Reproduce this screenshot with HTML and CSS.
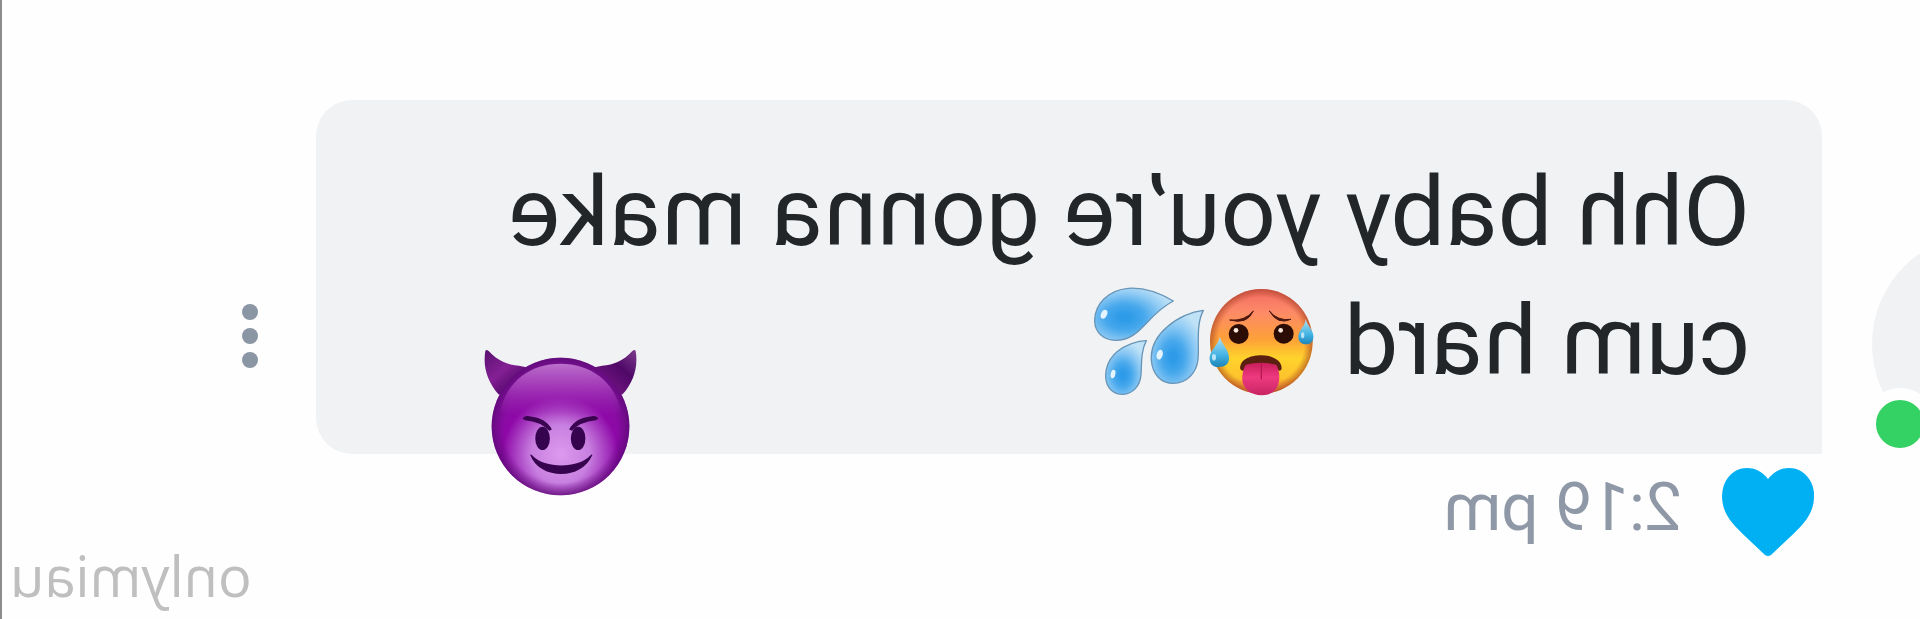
FILE: index.html
```
<!DOCTYPE html>
<html lang="en">
<head>
  <meta charset="UTF-8" />
  <meta name="viewport" content="width=device-width, initial-scale=1.0"/>
  <title>Chat</title>
  <link rel="stylesheet" href="styles.css">
</head>
<body>
  <main class="chat mirrored">
    <div class="avatar">
      <span class="online"></span>
    </div>

    <div class="bubble">
      <p class="message">Ohh baby you’re gonna make cum hard
        <svg class="emoji" viewBox="380 20 330 336" role="img" aria-label="hot face">
          <defs>
            <linearGradient id="hotFill" x1="0" y1="0" x2="0" y2="1">
              <stop offset="0" stop-color="#f26a62"/>
              <stop offset="0.22" stop-color="#fd8a68"/>
              <stop offset="0.48" stop-color="#fda038"/>
              <stop offset="0.66" stop-color="#ffd32c"/>
              <stop offset="0.85" stop-color="#fdc22c"/>
              <stop offset="1" stop-color="#e8783c"/>
            </linearGradient>
            <radialGradient id="hotEdge">
              <stop offset="0.84" stop-color="#a8401c" stop-opacity="0"/>
              <stop offset="1" stop-color="#a03a20" stop-opacity="0.6"/>
            </radialGradient>
            <linearGradient id="tongue" x1="0" y1="0" x2="0" y2="1">
              <stop offset="0" stop-color="#c81e5a"/>
              <stop offset="0.45" stop-color="#ee3a80"/>
              <stop offset="1" stop-color="#c82462"/>
            </linearGradient>
            <linearGradient id="sweat" x1="0" y1="0" x2="0" y2="1">
              <stop offset="0" stop-color="#b4e2f4"/>
              <stop offset="0.6" stop-color="#45b4e4"/>
              <stop offset="1" stop-color="#1d84b8"/>
            </linearGradient>
          </defs>
          <g transform="translate(1090 0) scale(-1 1)">
            <ellipse cx="543" cy="186" rx="154" ry="157" fill="url(#hotFill)"/>
            <ellipse cx="543" cy="186" rx="154" ry="157" fill="url(#hotEdge)"/>
            <path d="M448 122 Q494 126 519 95 Q500 137 448 122 Z M567 95 Q592 126 632 120 Q592 138 567 95 Z" fill="#4a1710" stroke="#4a1710" stroke-width="3" stroke-linejoin="round"/>
            <circle cx="475" cy="164" r="30" fill="#2b0d06"/>
            <circle cx="610" cy="163" r="30" fill="#2b0d06"/>
            <circle cx="467" cy="153" r="7" fill="#f8e8dc"/>
            <circle cx="601" cy="153" r="7" fill="#f8e8dc"/>
            <path d="M479 266 C480 238 514 228 543 228 C574 228 604 242 604 268 Q600 279 588 270 Q543 258 498 270 Q482 280 479 266 Z" fill="#5a2010"/>
            <path d="M496 256 Q543 244 588 256 Q600 280 596 306 Q588 348 543 348 Q496 346 486 306 Q484 276 496 256 Z" fill="url(#tongue)"/>
            <path d="M543 254 V298" stroke="#b8184e" stroke-width="4" stroke-linecap="round"/>
            <path d="M418 172 C424 194 446 212 446 236 C446 254 434 263 414 263 C396 263 387 252 388 234 C390 210 414 198 418 172 Z" fill="url(#sweat)"/>
            <path d="M676 119 C682 142 701 154 699 176 C697 190 688 195 677 195 C662 195 652 184 654 169 C656 150 674 142 676 119 Z" fill="url(#sweat)"/>
            <ellipse cx="401" cy="234" rx="6" ry="10" fill="#d8f3ff" opacity="0.8"/>
            <ellipse cx="667" cy="168" rx="5" ry="9" fill="#d8f3ff" opacity="0.8"/>
          </g>
        </svg><svg class="emoji" viewBox="35 20 330 336" role="img" aria-label="sweat droplets">
          <defs>
            <radialGradient id="dropA" cx="0.38" cy="0.56" r="0.62">
              <stop offset="0.1" stop-color="#2d9be8"/>
              <stop offset="0.4" stop-color="#47a8ec"/>
              <stop offset="0.75" stop-color="#8ecaf4"/>
              <stop offset="1" stop-color="#b9dff6"/>
            </radialGradient>
            <radialGradient id="dropB" cx="0.42" cy="0.64" r="0.62">
              <stop offset="0.1" stop-color="#2d9be8"/>
              <stop offset="0.35" stop-color="#47a8ec"/>
              <stop offset="0.7" stop-color="#8ecaf4"/>
              <stop offset="1" stop-color="#bfe2f6"/>
            </radialGradient>
          </defs>
          <g transform="translate(400 0) scale(-1 1)" stroke="#6795b8" stroke-width="4" stroke-linejoin="round">
            <path d="M273 65 C220 34 181 24 138 27 C78 32 36 74 37 126 C38 162 67 183 99 183 C178 182 190 108 273 65 Z" fill="url(#dropA)"/>
            <path d="M363 93 C328 97 285 115 254 143 C218 174 205 210 207 242 C210 286 237 312 273 312 C313 311 342 282 347 240 C351 192 340 137 363 93 Z" fill="url(#dropB)"/>
            <path d="M192 184 C166 184 129 196 104 217 C78 240 69 268 70 294 C72 327 94 345 121 345 C152 344 173 320 176 286 C178 248 176 214 192 184 Z" fill="url(#dropB)"/>
            <g fill="#e4f4ff" stroke="none">
              <ellipse cx="65" cy="105" rx="9" ry="14" transform="rotate(25 65 105)"/>
              <ellipse cx="232" cy="226" rx="9" ry="15" transform="rotate(15 232 226)"/>
              <ellipse cx="92" cy="284" rx="7" ry="13" transform="rotate(12 92 284)"/>
            </g>
          </g>
        </svg>
      </p>

      <svg class="sticker" viewBox="40 25 460 445" role="img" aria-label="smiling face with horns">
        <defs>
          <radialGradient id="devilFace" cx="0.5" cy="0.7" r="0.7">
            <stop offset="0" stop-color="#dc9aee"/>
            <stop offset="0.3" stop-color="#c880e0"/>
            <stop offset="0.6" stop-color="#8e08a8"/>
            <stop offset="1" stop-color="#7c1496"/>
          </radialGradient>
          <radialGradient id="devilEdge">
            <stop offset="0.82" stop-color="#5c0a78" stop-opacity="0"/>
            <stop offset="1" stop-color="#580870" stop-opacity="0.7"/>
          </radialGradient>
          <linearGradient id="devilShine" x1="0" y1="0" x2="0" y2="1">
            <stop offset="0" stop-color="#bc70cc"/>
            <stop offset="0.45" stop-color="#a840bc" stop-opacity="0.8"/>
            <stop offset="1" stop-color="#9820b0" stop-opacity="0"/>
          </linearGradient>
          <linearGradient id="hornLeft" x1="0" y1="0" x2="1" y2="1">
            <stop offset="0" stop-color="#5a1070"/>
            <stop offset="0.4" stop-color="#842094"/>
            <stop offset="0.75" stop-color="#4c0464"/>
            <stop offset="1" stop-color="#5a0874"/>
          </linearGradient>
          <linearGradient id="hornRight" x1="1" y1="0" x2="0" y2="1">
            <stop offset="0" stop-color="#7c3c8c"/>
            <stop offset="0.35" stop-color="#500868"/>
            <stop offset="0.7" stop-color="#701480"/>
            <stop offset="1" stop-color="#5a0874"/>
          </linearGradient>
        </defs>
        <g transform="translate(540 0) scale(-1 1)">
          <path d="M44 34 Q46 28 54 34 C82 64 110 76 145 78 L200 90 L150 150 L84 165 C50 126 36 82 44 34 Z" fill="url(#hornLeft)"/>
          <path d="M496 34 Q494 28 486 34 C458 64 430 76 395 78 L340 90 L390 150 L456 165 C490 126 504 82 496 34 Z" fill="url(#hornRight)"/>
          <circle cx="270" cy="261" r="207" fill="url(#devilFace)"/>
          <circle cx="270" cy="261" r="207" fill="url(#devilEdge)"/>
          <path d="M88 218 C108 122 182 72 270 72 C358 72 434 124 452 218 Q400 234 270 234 Q140 234 88 218 Z" fill="url(#devilShine)"/>
          <path d="M156 238 Q160 228 176 230 Q228 236 244 270 L236 274 Q210 246 164 242 Z M384 238 Q380 228 364 230 Q312 236 296 270 L304 274 Q330 246 376 242 Z" fill="#3a0450"/>
          <ellipse cx="216" cy="297" rx="22" ry="35" fill="#36034e"/>
          <ellipse cx="323" cy="297" rx="22" ry="35" fill="#36034e"/>
          <path d="M179 347 Q180 343 186 349 C222 388 322 388 359 349 Q365 343 366 347 C348 386 312 404 272 404 C232 404 194 386 179 347 Z" fill="#36034e"/>
        </g>
      </svg>
    </div>

    <div class="meta">
      <svg class="heart" viewBox="0 0 92 88" role="img" aria-label="liked">
        <path d="M46 11 C40 3 32 0 25 0 C10 0 0 13 0 28 C0 45 9 55 25 70 L43 87 Q46 89 49 87 L67 70 C83 55 92 45 92 28 C92 13 82 0 67 0 C60 0 52 3 46 11 Z" fill="#00b0f2"/>
      </svg>
      <time>2:19 pm</time>
    </div>

    <button type="button" class="more" aria-label="More options">
      <span></span>
      <span></span>
      <span></span>
    </button>

    <div class="watermark">onlymiau</div>
  </main>
</body>
</html>
```

FILE: styles.css
```
* {
  box-sizing: border-box;
}

body {
  margin: 0;
  background: #fefefe;
  font-family: Roboto, sans-serif;
}

.chat {
  position: relative;
  min-height: 100vh;
  padding-top: 100px;
  display: grid;
  grid-template-columns: 48px 1fr 264px;
  grid-template-rows: auto auto 1fr;
  column-gap: 50px;
  border-right: 2px solid #8c8c8c;
  overflow: hidden;
}

.mirrored {
  transform: scaleX(-1);
}

.avatar {
  position: relative;
  align-self: end;
  justify-self: end;
  width: 220px;
  height: 220px;
  border-radius: 50%;
  background: #f0f2f4;
}

.online {
  position: absolute;
  right: -8px;
  bottom: -6px;
  width: 72px;
  height: 72px;
  border: 12px solid #fefefe;
  border-radius: 50%;
  background: #34d164;
}

.bubble {
  position: relative;
  padding: 48px 72px;
  border-radius: 36px 36px 36px 0;
  background: #f0f2f4;
}

.message {
  margin: 0;
  font-size: 97px;
  line-height: 129px;
  color: #232629;
}

.emoji {
  width: 110px;
  height: 112px;
  margin-left: 3px;
  vertical-align: -24px;
}

.sticker {
  position: absolute;
  right: 168px;
  bottom: -42px;
  width: 153px;
  height: 148px;
}

.meta {
  grid-column: 2;
  grid-row: 2;
  display: flex;
  align-items: flex-start;
  gap: 40px;
  padding: 14px 8px 16px;
}

.heart {
  width: 92px;
  height: 88px;
}

.meta time {
  font-size: 66px;
  line-height: 80px;
  color: #8e98a6;
}

.more {
  grid-column: 3;
  grid-row: 1 / 3;
  align-self: center;
  justify-self: start;
  display: flex;
  flex-direction: column;
  align-items: center;
  gap: 8px;
  width: 32px;
  padding: 0;
  border: none;
  background: none;
  cursor: pointer;
}

.more span {
  width: 16px;
  height: 16px;
  border-radius: 50%;
  background: #8a96a4;
}

.watermark {
  position: absolute;
  right: 8px;
  bottom: 14px;
  font-family: "Open Sans", sans-serif;
  font-size: 56px;
  line-height: 60px;
  color: #bfbfbf;
}
```
